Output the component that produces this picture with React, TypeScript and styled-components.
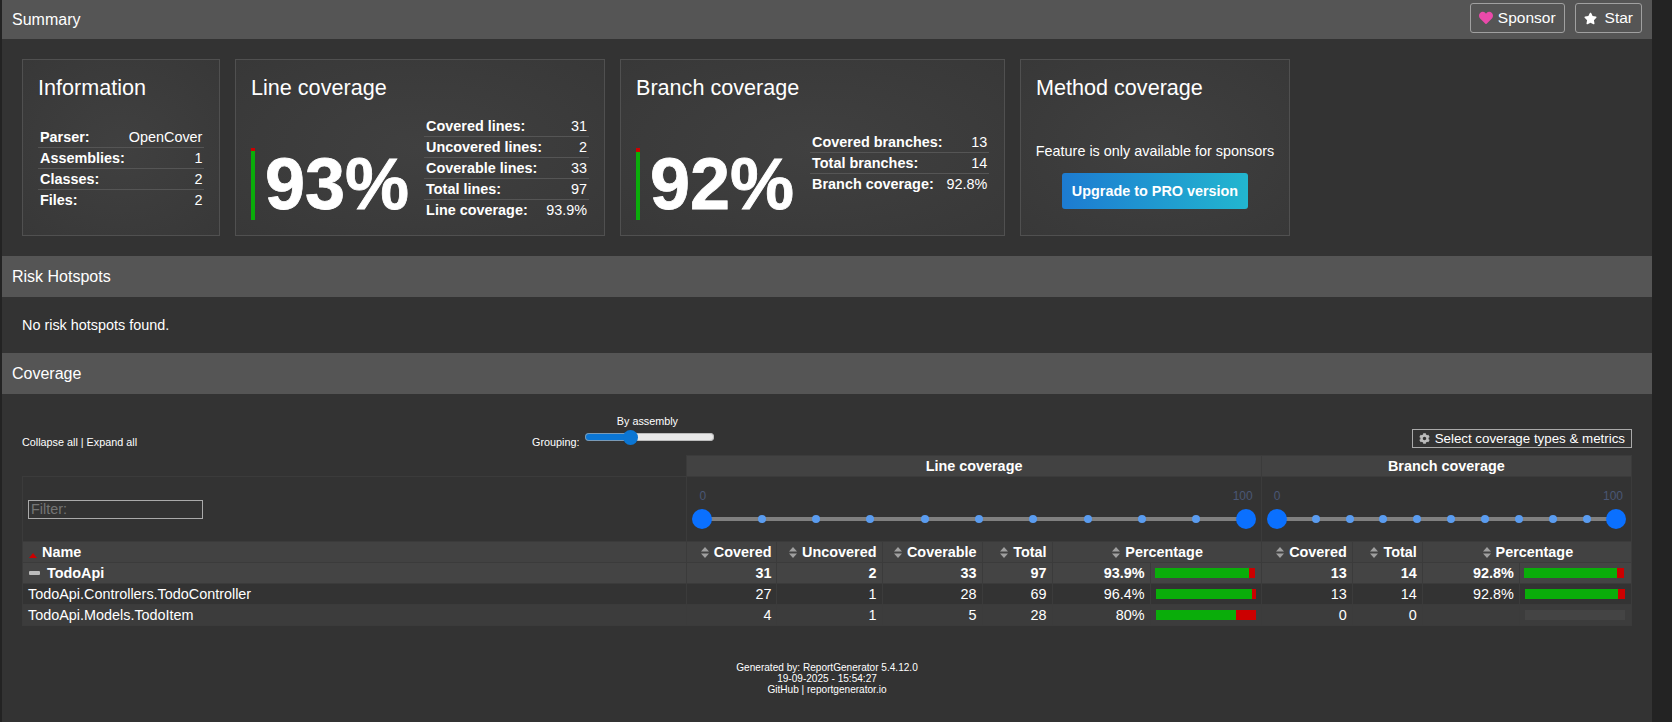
import React from 'react';
import styled, { createGlobalStyle } from 'styled-components';
import { FaCog, FaHeart, FaStar } from 'react-icons/fa';

const GlobalStyle = createGlobalStyle`
  html, body {
    margin: 0;
    padding: 0;
    height: 100%;
    overflow: hidden;
    background: #232323;
    color: #fff;
    font-family: 'Liberation Sans', Arial, sans-serif;
    font-size: 14.4px;
  }
`;

const Page = styled.div`
  box-sizing: border-box;
  width: 1650px;
  height: 722px;
  margin-left: 2px;
  background: #333;
`;

const SectionHeader = styled.div<{ $height?: number }>`
  display: flex;
  align-items: center;
  justify-content: space-between;
  box-sizing: border-box;
  height: ${p => p.$height ?? 41}px;
  padding: 0 10px;
  background: #555;
  font-size: 16px;
`;

const HeaderActions = styled.div`
  display: flex;
  gap: 10px;
  margin-top: -3px;
`;

const HeaderButton = styled.a<{ $gap: number }>`
  display: flex;
  align-items: center;
  gap: ${p => p.$gap}px;
  box-sizing: border-box;
  height: 30px;
  padding: 0 8px;
  border: 1px solid #a0a0a0;
  border-radius: 3px;
  font-size: 15.5px;
`;

const Cards = styled.div`
  display: flex;
  align-items: flex-start;
  gap: 15px;
  padding: 20px 0 20px 20px;
`;

const Card = styled.div<{ $width: number }>`
  box-sizing: border-box;
  width: ${p => p.$width}px;
  height: 177px;
  padding: 15px;
  border: 1px solid #505050;
  background: radial-gradient(ellipse at center, #404040 0%, #383838 100%);
`;

const CardTitle = styled.div`
  height: 25px;
  margin-bottom: 16px;
  font-size: 21.6px;
  line-height: 25px;
`;

const CardBody = styled.div<{ $top: number }>`
  display: flex;
  align-items: flex-start;
  margin-top: ${p => p.$top}px;
`;

const LargeValue = styled.div<{ $top: number }>`
  display: flex;
  flex: none;
  align-items: center;
  height: 72px;
  margin-top: ${p => p.$top}px;
  font-size: 72px;
  font-weight: 700;
  line-height: 72px;
  -webkit-text-stroke: 0.8px #fff;
`;

const VerticalBar = styled.div<{ $covered: number }>`
  flex: none;
  width: 4px;
  height: 72px;
  margin-right: 10px;
  background: linear-gradient(to top, #0aad0a ${p => p.$covered}%, #c00 ${p => p.$covered}%);
`;

const StatTable = styled.table<{ $width: number; $left: number }>`
  width: ${p => p.$width}px;
  margin-left: ${p => p.$left}px;
  border-collapse: collapse;
  font-size: 14.4px;

  tr + tr { border-top: 1px solid #555; }
  th, td { height: 20px; padding: 0 2px; line-height: 20px; white-space: nowrap; }
  th { font-weight: 700; text-align: left; }
  td { text-align: right; }
`;

const SponsorBody = styled.div`
  display: flex;
  flex-direction: column;
  align-items: center;
  margin-top: 43px;
  font-size: 14.4px;
  white-space: nowrap;
`;

const UpgradeButton = styled.a`
  display: flex;
  align-items: center;
  justify-content: center;
  width: 186px;
  height: 36px;
  margin-top: 14px;
  border-radius: 3px;
  background: linear-gradient(to right, #1d7bd1, #22b6cf);
  font-weight: 700;
`;

const NoHotspots = styled.div`
  height: 56px;
  padding-left: 20px;
  line-height: 56px;
  font-size: 14.4px;
`;

const CoverageBody = styled.div`
  padding: 19px 20px 0 20px;
`;

const Toolbar = styled.div`
  display: grid;
  grid-template-columns: 510px 1fr 1fr;
  align-items: end;
  height: 42px;
  font-size: 10.8px;
`;

const ToolbarLinks = styled.div`
  padding-bottom: 7px;
`;

const Grouping = styled.div`
  display: flex;
  align-items: flex-end;
  padding-bottom: 7px;
`;

const GroupingControl = styled.div`
  display: flex;
  flex-direction: column;
  align-items: center;
  margin-left: 6px;
`;

const GroupingLabel = styled.span`
  margin-right: 5px;
`;

const GroupingSlider = styled.input`
  appearance: none;
  display: block;
  width: 129px;
  height: 15px;
  margin: 2.5px 0 3.5px;
  background: transparent;

  &::-webkit-slider-runnable-track {
    height: 8px;
    border-radius: 4px;
    background: linear-gradient(to right, #0b76d4 36%, #e8e8e8 36%);
    box-shadow: inset 0 0 0 1px rgba(170, 170, 170, 0.7);
  }

  &::-webkit-slider-thumb {
    appearance: none;
    width: 15px;
    height: 15px;
    margin-top: -3.5px;
    border-radius: 50%;
    background: #0b76d4;
  }
`;

const MetricsWrap = styled.div`
  display: flex;
  justify-content: flex-end;
  padding-bottom: 7px;
`;

const MetricsButton = styled.a`
  display: flex;
  align-items: center;
  gap: 5px;
  box-sizing: border-box;
  height: 19px;
  padding: 0 6px;
  border: 1px solid #aaa;
  font-size: 13.33px;

  svg { color: #bbb; width: 11px; height: 11px; }
`;

const CoverageTable = styled.table`
  table-layout: fixed;
  width: 1610px;
  border-collapse: collapse;
  font-size: 14.4px;

  th, td {
    box-sizing: border-box;
    height: 21px;
    padding: 0 5px 0 2px;
    border: 1px solid #3b3b3b;
    white-space: nowrap;
  }
`;

const GroupHead = styled.th`
  padding: 0 !important;
  background: #424242;
  font-weight: 700;
  text-align: center;
`;

const BlankHead = styled.th`
  border: none !important;
  background: #333;
`;

const FilterRow = styled.tr`
  th, td { height: 65px; background: #333; padding: 0; }
`;

const FilterInput = styled.input`
  display: block;
  box-sizing: border-box;
  width: 175px;
  height: 19px;
  margin: 0 0 0 5px;
  padding: 0 2px;
  border: 1px solid #aaa;
  background: transparent;
  color: #fff;
  font: 14.4px 'Liberation Sans', Arial, sans-serif;

  &::placeholder { color: #757575; opacity: 1; }
`;

const RangeLabels = styled.div`
  display: flex;
  justify-content: space-between;
  padding: 0 8px 0 12px;
  color: #4a5775;
  font-size: 12px;
  line-height: 14px;
`;

const RangeTrack = styled.div`
  position: relative;
  height: 20px;
  margin: 6px 15px 0;
  background: linear-gradient(#808080, #808080) center / 100% 4px no-repeat;
`;

const RangeHandle = styled.span<{ $side: 'left' | 'right' }>`
  position: absolute;
  top: 0;
  ${p => p.$side}: -10px;
  width: 20px;
  height: 20px;
  border-radius: 50%;
  background: #0a70ff;
`;

const RangeTick = styled.span`
  position: absolute;
  top: 6px;
  width: 8px;
  height: 8px;
  margin-left: -4px;
  border-radius: 50%;
  background: #5a9cf0;
`;

const ColumnHead = styled.th`
  background: #424242;
  font-weight: 700;
  text-align: right;
`;

const PercentHead = styled(ColumnHead)`
  padding: 0 0 0 2px !important;
  text-align: center;
`;

const NameHead = styled(ColumnHead)`
  padding-left: 6px !important;
  text-align: left;
`;

const SortArrows = styled.svg`
  width: 8px;
  height: 11px;
  margin-right: 5px;
  vertical-align: -1px;
  fill: #a0a0a0;
`;

const SortedArrow = styled.svg`
  width: 8px;
  height: 5px;
  margin-right: 5px;
  vertical-align: -1px;
  fill: #c00;
`;

const DataRow = styled.tr<{ $bg: string; $bold?: boolean }>`
  background: ${p => p.$bg};
  font-weight: ${p => (p.$bold ? 700 : 400)};
`;

const NameCell = styled.td`
  padding-left: 5px !important;
`;

const CollapseMark = styled.span`
  display: inline-block;
  width: 11px;
  height: 4px;
  margin: 0 7px 0 1px;
  border-radius: 1px;
  background: #bbb;
  vertical-align: 3px;
`;

const NumCell = styled.td`
  text-align: right;
`;

const BarCell = styled.td<{ $shift?: boolean }>`
  padding: 0 5px 0 ${p => (p.$shift ? 4 : 5)}px !important;
`;

const CoverageBar = styled.div<{ $empty?: boolean }>`
  display: flex;
  width: 100px;
  height: 10px;
  background: ${p => (p.$empty ? '#444' : '#c00')};
`;

const CoverageFill = styled.div`
  height: 100%;
  background: #0aad0a;
`;

const Footer = styled.div`
  margin-top: 36px;
  font-size: 10.08px;
  line-height: 11px;
  text-align: center;
`;

const Stat = ({ rows, ...rest }: { rows: [string, string][]; $width: number; $left: number }) => (
  <StatTable {...rest}>
    <tbody>
      {rows.map(([label, value]) => (
        <tr key={label}>
          <th>{label}</th>
          <td>{value}</td>
        </tr>
      ))}
    </tbody>
  </StatTable>
);

const RangeCell = ({ span }: { span: number }) => (
  <td colSpan={span}>
    <RangeLabels>
      <span>0</span>
      <span>100</span>
    </RangeLabels>
    <RangeTrack>
      <RangeHandle $side="left" />
      {Array.from({ length: 9 }, (_, i) => (
        <RangeTick key={i} style={{ left: `calc(${(i + 1) * 10}% + 5px)` }} />
      ))}
      <RangeHandle $side="right" />
    </RangeTrack>
  </td>
);

const Arrows = () => (
  <SortArrows viewBox="0 0 8 11">
    <path d="M4 0 8 4.6H0zM4 11 0 6.4h8z" />
  </SortArrows>
);

const Bar = ({ percent, shift }: { percent?: number; shift?: boolean }) => (
  <BarCell $shift={shift}>
    <CoverageBar $empty={percent === undefined}>
      {percent !== undefined && <CoverageFill style={{ width: `${percent}%` }} />}
    </CoverageBar>
  </BarCell>
);

const lineCols = [90, 105, 100, 70, 98, 111];
const branchCols = [91, 70, 97, 112];

const rows = [
  { name: 'TodoApi', bold: true, bg: '#444', line: [31, 2, 33, 97], linePct: '93.9%', lineBar: 93.9, branch: [13, 14], branchPct: '92.8%', branchBar: 92.8 },
  { name: 'TodoApi.Controllers.TodoController', bold: false, bg: '#333', line: [27, 1, 28, 69], linePct: '96.4%', lineBar: 96.4, branch: [13, 14], branchPct: '92.8%', branchBar: 92.8 },
  { name: 'TodoApi.Models.TodoItem', bold: false, bg: '#3c3c3c', line: [4, 1, 5, 28], linePct: '80%', lineBar: 80, branch: [0, 0], branchPct: '', branchBar: undefined },
];

export default function App() {
  return (
    <Page>
      <GlobalStyle />
      <SectionHeader $height={39}>
        Summary
        <HeaderActions>
          <HeaderButton $gap={5}>
            <FaHeart color="#ea4aaa" size={14} />
            Sponsor
          </HeaderButton>
          <HeaderButton $gap={8}>
            <FaStar color="#fff" size={13} />
            Star
          </HeaderButton>
        </HeaderActions>
      </SectionHeader>

      <Cards>
        <Card $width={198}>
          <CardTitle>Information</CardTitle>
          <CardBody $top={27}>
            <Stat
              $width={166}
              $left={0}
              rows={[
                ['Parser:', 'OpenCover'],
                ['Assemblies:', '1'],
                ['Classes:', '2'],
                ['Files:', '2'],
              ]}
            />
          </CardBody>
        </Card>
        <Card $width={370}>
          <CardTitle>Line coverage</CardTitle>
          <CardBody $top={0}>
            <LargeValue $top={32}>
              <VerticalBar $covered={96} />
              93%
            </LargeValue>
            <Stat
              $width={165}
              $left={15}
              rows={[
                ['Covered lines:', '31'],
                ['Uncovered lines:', '2'],
                ['Coverable lines:', '33'],
                ['Total lines:', '97'],
                ['Line coverage:', '93.9%'],
              ]}
            />
          </CardBody>
        </Card>
        <Card $width={385}>
          <CardTitle>Branch coverage</CardTitle>
          <CardBody $top={16}>
            <LargeValue $top={32}>
              <VerticalBar $covered={94} />
              92%
            </LargeValue>
            <BranchStats>
              <Stat
                $width={178}
                $left={16}
                rows={[
                  ['Covered branches:', '13'],
                  ['Total branches:', '14'],
                  ['Branch coverage:', '92.8%'],
                ]}
              />
            </BranchStats>
          </CardBody>
        </Card>
        <Card $width={270}>
          <CardTitle>Method coverage</CardTitle>
          <SponsorBody>
            Feature is only available for sponsors
            <UpgradeButton>Upgrade to PRO version</UpgradeButton>
          </SponsorBody>
        </Card>
      </Cards>

      <SectionHeader>Risk Hotspots</SectionHeader>
      <NoHotspots>No risk hotspots found.</NoHotspots>

      <SectionHeader>Coverage</SectionHeader>
      <CoverageBody>
        <Toolbar>
          <ToolbarLinks>Collapse all | Expand all</ToolbarLinks>
          <Grouping>
            Grouping:
            <GroupingControl>
              <GroupingLabel>By assembly</GroupingLabel>
              <GroupingSlider type="range" min={0} max={3} defaultValue={1} />
            </GroupingControl>
          </Grouping>
          <MetricsWrap>
            <MetricsButton>
              <FaCog />
              Select coverage types &amp; metrics
            </MetricsButton>
          </MetricsWrap>
        </Toolbar>

        <CoverageTable>
          <colgroup>
            <col style={{ width: 664 }} />
            {lineCols.map((w, i) => (
              <col key={i} style={{ width: w }} />
            ))}
            {branchCols.map((w, i) => (
              <col key={i} style={{ width: w }} />
            ))}
          </colgroup>
          <thead>
            <tr>
              <BlankHead />
              <GroupHead colSpan={6}>Line coverage</GroupHead>
              <GroupHead colSpan={4}>Branch coverage</GroupHead>
            </tr>
            <FilterRow>
              <th>
                <FilterInput placeholder="Filter:" />
              </th>
              <RangeCell span={6} />
              <RangeCell span={4} />
            </FilterRow>
            <tr>
              <NameHead>
                <SortedArrow viewBox="0 0 8 5">
                  <path d="M4 0 8 5H0z" />
                </SortedArrow>
                Name
              </NameHead>
              {['Covered', 'Uncovered', 'Coverable', 'Total'].map(label => (
                <ColumnHead key={label}>
                  <Arrows />
                  {label}
                </ColumnHead>
              ))}
              <PercentHead colSpan={2}>
                <Arrows />
                Percentage
              </PercentHead>
              {['Covered', 'Total'].map(label => (
                <ColumnHead key={label}>
                  <Arrows />
                  {label}
                </ColumnHead>
              ))}
              <PercentHead colSpan={2}>
                <Arrows />
                Percentage
              </PercentHead>
            </tr>
          </thead>
          <tbody>
            {rows.map(row => (
              <DataRow key={row.name} $bg={row.bg} $bold={row.bold}>
                <NameCell>
                  {row.bold && <CollapseMark />}
                  {row.name}
                </NameCell>
                {row.line.map((v, i) => (
                  <NumCell key={i}>{v}</NumCell>
                ))}
                <NumCell>{row.linePct}</NumCell>
                <Bar percent={row.lineBar} shift={row.bold} />
                {row.branch.map((v, i) => (
                  <NumCell key={i}>{v}</NumCell>
                ))}
                <NumCell>{row.branchPct}</NumCell>
                <Bar percent={row.branchBar} shift={row.bold} />
              </DataRow>
            ))}
          </tbody>
        </CoverageTable>

        <Footer>
          Generated by: ReportGenerator 5.4.12.0
          <br />
          19-09-2025 - 15:54:27
          <br />
          GitHub | reportgenerator.io
        </Footer>
      </CoverageBody>
    </Page>
  );
}

const BranchStats = styled.div`
  margin-top: 16px;
`;
